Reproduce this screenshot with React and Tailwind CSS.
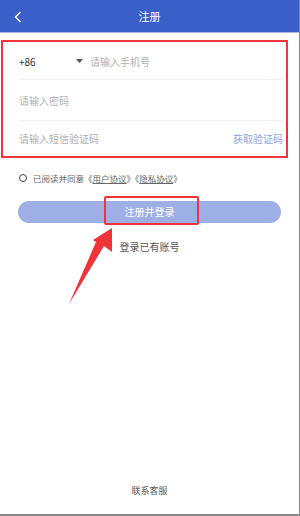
import React from "react";

const font = { fontFamily: '"Noto Sans CJK SC", "Noto Sans", sans-serif' };

const Register = () => {
  return (
    <div style={font} className="relative w-[300px] h-[516px] bg-white flex flex-col border-r border-b-2 border-[#8a8a8a] overflow-hidden">
      {/* header */}
      <div className="h-[33px] bg-[#3b5fc9] flex items-center relative border-b border-[#a9b8e8]">
        <svg className="absolute left-[14px] top-[11px]" width="8" height="12" viewBox="0 0 8 12">
          <path d="M6.5 1 L1.5 6 L6.5 11" fill="none" stroke="#fff" strokeWidth="1.4" />
        </svg>
        <div className="flex-1 text-center text-white text-[11px]">注册</div>
      </div>

      {/* form */}
      <div className="mt-[7px] ml-[1px] w-[287px] h-[118px] border-2 border-[#f0343a] flex flex-col pl-[16px] pr-[3px] pt-[1px]">
        <div className="h-[37px] flex items-center border-b border-[#f0f0f0] text-[10px]">
          <span className="text-[#333] w-[57px]">+86</span>
          <svg width="7" height="4" viewBox="0 0 7 4" className="mr-[7px]">
            <path d="M0 0 L7 0 L3.5 4 Z" fill="#555" />
          </svg>
          <span className="text-[#b0b0b0]">请输入手机号</span>
        </div>
        <div className="h-[41px] flex items-center border-b border-[#f0f0f0] text-[10px] text-[#b0b0b0]">
          请输入密码
        </div>
        <div className="flex-1 flex items-center justify-between text-[10px]">
          <span className="text-[#b0b0b0]">请输入短信验证码</span>
          <span className="text-[#8fa4e2]">获取验证码</span>
        </div>
      </div>

      {/* agreement */}
      <div className="mt-[14px] ml-[19px] flex items-center text-[8.5px] text-[#666]">
        <span className="w-[8px] h-[8px] rounded-full border border-[#444] mr-[6px]" />
        <span>已阅读并同意《<span className="underline">用户协议</span>》《<span className="underline">隐私协议</span>》</span>
      </div>

      {/* button */}
      <div className="mt-[16px] mx-[18px] h-[22px] rounded-full bg-[#9eafe6] flex items-center justify-center text-white text-[10px]">
        注册并登录
      </div>

      <div className="mt-[16px] text-center text-[10px] text-[#555]">登录已有账号</div>

      <div className="mt-auto mb-[17px] text-center text-[9px] text-[#555]">联系客服</div>

      {/* annotation overlays */}
      <div className="absolute left-[104px] top-[196px] w-[95px] h-[29px] border-2 border-[#f0343a] rounded-[2px]" />
      <svg className="absolute left-0 top-0" width="300" height="516" viewBox="0 0 300 516">
        <path d="M112 228 L112 252 L104 246 L69 304 L96 242 L93 240 Z" fill="#f2333a" />
      </svg>
    </div>
  );
};

export default function App() {
  return <Register />;
}
